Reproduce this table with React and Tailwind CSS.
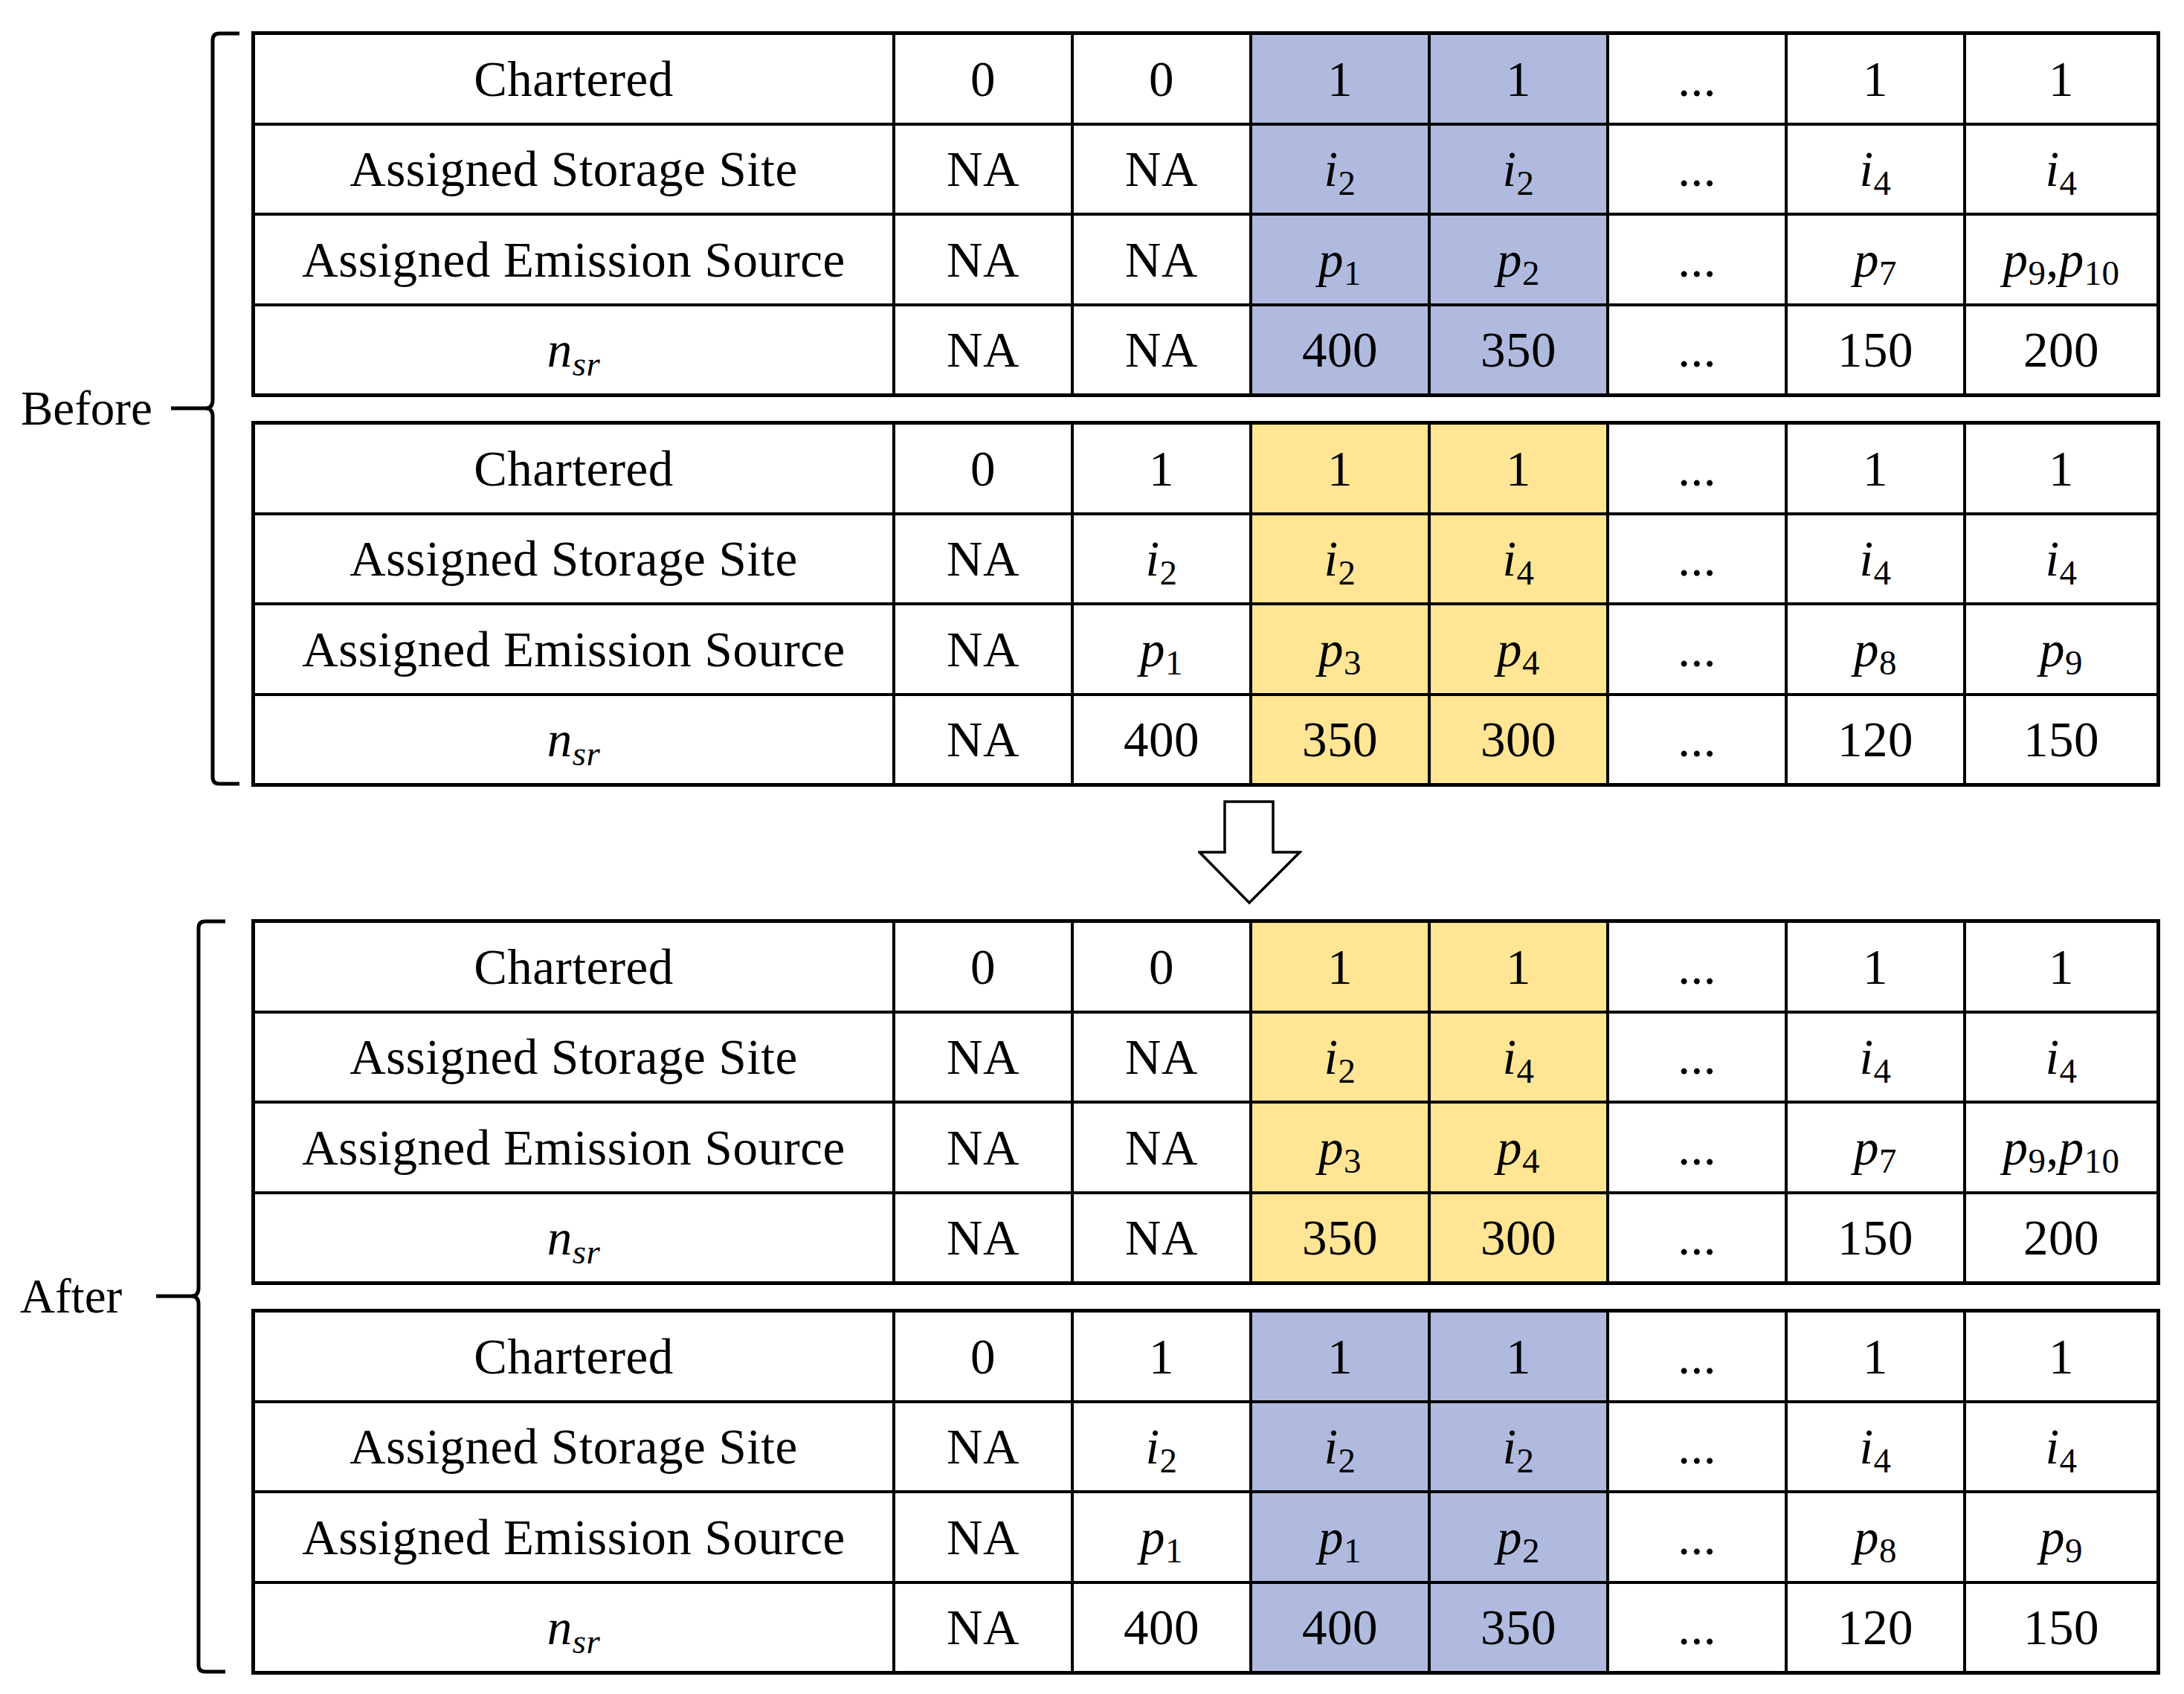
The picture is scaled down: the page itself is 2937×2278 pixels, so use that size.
import React from 'react';

const T1 = [
  ['Chartered', '0', '0', '1', '1', '...', '1', '1'],
  ['Assigned Storage Site', 'NA', 'NA', 'i_2', 'i_2', '...', 'i_4', 'i_4'],
  ['Assigned Emission Source', 'NA', 'NA', 'p_1', 'p_2', '...', 'p_7', 'p_9,p_10'],
  ['n_sr', 'NA', 'NA', '400', '350', '...', '150', '200'],
];
const T2 = [
  ['Chartered', '0', '1', '1', '1', '...', '1', '1'],
  ['Assigned Storage Site', 'NA', 'i_2', 'i_2', 'i_4', '...', 'i_4', 'i_4'],
  ['Assigned Emission Source', 'NA', 'p_1', 'p_3', 'p_4', '...', 'p_8', 'p_9'],
  ['n_sr', 'NA', '400', '350', '300', '...', '120', '150'],
];
const T3 = [
  ['Chartered', '0', '0', '1', '1', '...', '1', '1'],
  ['Assigned Storage Site', 'NA', 'NA', 'i_2', 'i_4', '...', 'i_4', 'i_4'],
  ['Assigned Emission Source', 'NA', 'NA', 'p_3', 'p_4', '...', 'p_7', 'p_9,p_10'],
  ['n_sr', 'NA', 'NA', '350', '300', '...', '150', '200'],
];
const T4 = [
  ['Chartered', '0', '1', '1', '1', '...', '1', '1'],
  ['Assigned Storage Site', 'NA', 'i_2', 'i_2', 'i_2', '...', 'i_4', 'i_4'],
  ['Assigned Emission Source', 'NA', 'p_1', 'p_1', 'p_2', '...', 'p_8', 'p_9'],
  ['n_sr', 'NA', '400', '400', '350', '...', '120', '150'],
];

function Val({ v }) {
  if (!v.includes('_')) return <span>{v}</span>;
  const parts = v.split(',');
  return (
    <span>
      {parts.map((p, i) => {
        const [b, s] = p.split('_');
        const isNum = /\d/.test(s);
        return (
          <React.Fragment key={i}>
            {i > 0 && <span>,</span>}
            <i>{b}</i>
            <sub className={isNum ? 'text-[0.7em] not-italic' : 'text-[0.7em] italic'}>{s}</sub>
          </React.Fragment>
        );
      })}
    </span>
  );
}

function Table({ rows, hl }) {
  return (
    <div className="grid grid-cols-[857px_236px_236px_236px_236px_236px_236px_256px] auto-rows-[117.5px] gap-[4px] p-[5px] bg-black">
      {rows.map((r, ri) =>
        r.map((c, ci) => (
          <div
            key={ri + '-' + ci}
            className={
              'flex items-center justify-center tracking-[0.5px] ' +
              (ci === 3 || ci === 4 ? hl : 'bg-white')
            }
          >
            <Val v={c} />
          </div>
        ))
      )}
    </div>
  );
}

function Brace({ width, x }) {
  const d = `M${x + 36} 3 L${x + 9} 3 Q${x} 3 ${x} 12 L${x} 496 Q${x} 506 ${x - 8} 507 Q${x} 508 ${x} 518 L${x} 1003 Q${x} 1012 ${x + 9} 1012 L${x + 36} 1012`;
  return (
    <svg width={width} height="1016" className="shrink-0" viewBox={`0 0 ${width} 1016`}>
      <path d={d} fill="none" stroke="black" strokeWidth="5" strokeLinecap="butt" strokeLinejoin="round" />
      <path d={`M5 507 L${x - 6} 507`} fill="none" stroke="black" strokeWidth="5" />
    </svg>
  );
}

export default function App() {
  const BLUE = 'bg-[#b0badf]';
  const YELLOW = 'bg-[#ffe594]';
  return (
    <div className="w-[2937px] h-[2278px] bg-white text-black font-['Liberation_Serif',serif] text-[67px] leading-normal pt-[42px] flex flex-col">
      {/* Before */}
      <div className="flex flex-row">
        <div className="w-[225px] shrink-0 flex items-center pl-[28px] text-[65px]">Before</div>
        <Brace width={113} x={61} />
        <div className="flex flex-col gap-[32px]">
          <Table rows={T1} hl={BLUE} />
          <Table rows={T2} hl={YELLOW} />
        </div>
      </div>

      {/* Arrow */}
      <div className="h-[178px] flex flex-row items-start pl-[1611px] pt-[18px]">
        <svg width="140" height="142" viewBox="0 0 140 142">
          <polygon
            points="36,2 101,2 101,70 137,70 69,138 2,70 36,70"
            fill="white"
            stroke="black"
            strokeWidth="3.5"
            strokeLinejoin="miter"
          />
        </svg>
      </div>

      {/* After */}
      <div className="flex flex-row">
        <div className="w-[205px] shrink-0 flex items-center pl-[27px] text-[65px]">After</div>
        <Brace width={133} x={62} />
        <div className="flex flex-col gap-[32px]">
          <Table rows={T3} hl={YELLOW} />
          <Table rows={T4} hl={BLUE} />
        </div>
      </div>
    </div>
  );
}
